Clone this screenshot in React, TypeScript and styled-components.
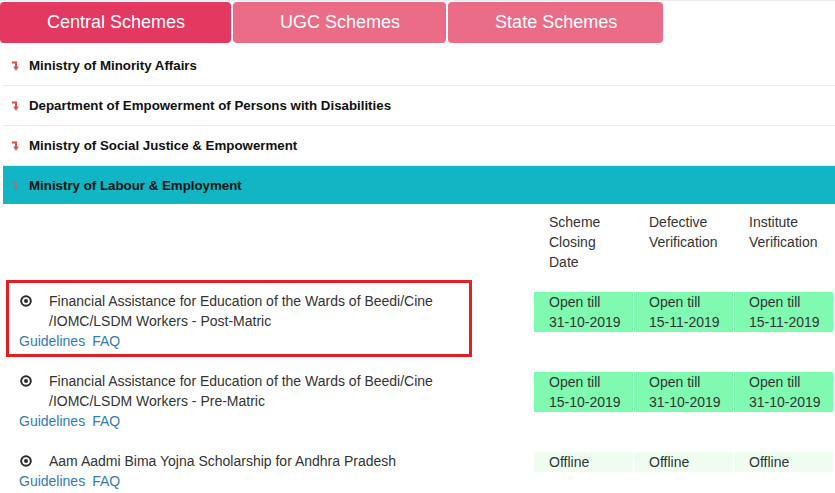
import React, { FC } from 'react';
import styled, { createGlobalStyle } from 'styled-components';

const GlobalStyle = createGlobalStyle`
  body {
    margin: 0;
    background: #fff;
    font-family: 'Liberation Sans', Arial, sans-serif;
    color: #333;
  }
`;

type Scheme = {
  title: string[];
  dates: string[][];
  offline?: boolean;
  highlighted?: boolean;
};

const tabs = ['Central Schemes', 'UGC Schemes', 'State Schemes'];

const ministries = [
  'Ministry of Minority Affairs',
  'Department of Empowerment of Persons with Disabilities',
  'Ministry of Social Justice & Empowerment',
  'Ministry of Labour & Employment',
];

const schemes: Scheme[] = [
  {
    title: ['Financial Assistance for Education of the Wards of Beedi/Cine', '/IOMC/LSDM Workers - Post-Matric'],
    dates: [
      ['Open till', '31-10-2019'],
      ['Open till', '15-11-2019'],
      ['Open till', '15-11-2019'],
    ],
    highlighted: true,
  },
  {
    title: ['Financial Assistance for Education of the Wards of Beedi/Cine', '/IOMC/LSDM Workers - Pre-Matric'],
    dates: [
      ['Open till', '15-10-2019'],
      ['Open till', '31-10-2019'],
      ['Open till', '31-10-2019'],
    ],
  },
  {
    title: ['Aam Aadmi Bima Yojna Scholarship for Andhra Pradesh'],
    dates: [['Offline'], ['Offline'], ['Offline']],
    offline: true,
  },
];

const ArrowIcon: FC = () => (
  <svg width="8" height="10" viewBox="0 0 8 10">
    <path d="M0 1.5 H4 V6" fill="none" stroke="#d9534f" strokeWidth="2" />
    <path d="M1 5.5 H7 L4 9.8 Z" fill="#d9534f" />
  </svg>
);

const RecordIcon: FC = () => (
  <svg width="12" height="12" viewBox="0 0 12 12">
    <circle cx="6" cy="6" r="4.8" fill="none" stroke="#2b2b2b" strokeWidth="2" />
    <circle cx="6" cy="6" r="2" fill="#2b2b2b" />
  </svg>
);

const App: FC = () => {
  return (
    <>
      <GlobalStyle />
      <Page>
        <TabBar>
          {tabs.map((t, i) => (
            <Tab key={t} active={i === 0}>
              {t}
            </Tab>
          ))}
        </TabBar>
        <Accordion>
          {ministries.map((m, i) => (
            <Ministry key={m} open={i === ministries.length - 1}>
              <ArrowWrap open={i === ministries.length - 1}>
                <ArrowIcon />
              </ArrowWrap>
              {m}
            </Ministry>
          ))}
        </Accordion>
        <Table>
          <HeaderRow>
            <span />
            <HeaderCell>Scheme Closing Date</HeaderCell>
            <HeaderCell>Defective Verification</HeaderCell>
            <HeaderCell>Institute Verification</HeaderCell>
          </HeaderRow>
          {schemes.map((s, i) => (
            <SchemeRow key={i}>
              <SchemeInfo highlighted={s.highlighted}>
                <TitleLine>
                  <IconBox>
                    <RecordIcon />
                  </IconBox>
                  <div>
                    {s.title.map((l) => (
                      <div key={l}>{l}</div>
                    ))}
                  </div>
                </TitleLine>
                <Links>
                  <Link href="#">Guidelines</Link>
                  <Link href="#">FAQ</Link>
                </Links>
              </SchemeInfo>
              {s.dates.map((d, j) => (
                <DateCell key={j} offline={s.offline}>
                  {d.map((l) => (
                    <div key={l}>{l}</div>
                  ))}
                </DateCell>
              ))}
            </SchemeRow>
          ))}
        </Table>
      </Page>
    </>
  );
};

export default App;

const Page = styled.div`
  width: 835px;
  border-top: 1px solid #eee;
  padding-top: 1px;
`;
const TabBar = styled.div`
  display: flex;
  gap: 2px;
`;
const Tab = styled.div<{ active?: boolean }>`
  height: 41px;
  line-height: 41px;
  padding: 0 46px 0 47px;
  border-radius: 4px;
  font-size: 18px;
  color: #fff;
  background-color: ${(p) => (p.active ? '#e3385f' : '#eb6c87')};
  cursor: pointer;
`;
const Accordion = styled.div`
  margin: 3px 0 0 3px;
`;
const Ministry = styled.div<{ open?: boolean }>`
  display: flex;
  align-items: center;
  height: ${(p) => (p.open ? '38px' : '39px')};
  padding-left: 9px;
  font-size: 13.3px;
  font-weight: 700;
  color: #111;
  background-color: ${(p) => (p.open ? '#12b5c3' : '#fff')};
  border-bottom: ${(p) => (p.open ? 'none' : '1px solid #e9e9e9')};
`;
const ArrowWrap = styled.span<{ open?: boolean }>`
  display: flex;
  width: 17px;
  margin-top: 1px;
  opacity: ${(p) => (p.open ? 0.45 : 1)};
`;
const Table = styled.div`
  margin-left: 3px;
  font-size: 14px;
  line-height: 20px;
`;
const HeaderRow = styled.div`
  display: grid;
  grid-template-columns: 531px repeat(3, 100px);
  padding: 8px 0;
`;
const HeaderCell = styled.div`
  padding: 0 15px;
`;
const SchemeRow = styled.div`
  display: grid;
  grid-template-columns: 531px repeat(3, 100px);
  align-items: start;
  margin-bottom: 3px;
`;
const SchemeInfo = styled.div<{ highlighted?: boolean }>`
  width: 466px;
  box-sizing: border-box;
  margin-left: 3px;
  padding: 8px 10px 3px;
  border: 3px solid ${(p) => (p.highlighted ? '#e31e25' : 'transparent')};
`;
const TitleLine = styled.div`
  display: flex;
`;
const IconBox = styled.span`
  display: flex;
  align-items: center;
  height: 20px;
  width: 29px;
  padding-left: 1px;
  flex-shrink: 0;
`;
const Links = styled.div`
  display: flex;
  gap: 7px;
`;
const Link = styled.a`
  color: #337ab7;
  text-decoration: none;
`;
const DateCell = styled.div<{ offline?: boolean }>`
  margin: 12px 1px 0 0;
  padding: 0 0 0 15px;
  white-space: nowrap;
  background-color: ${(p) => (p.offline ? '#effdf1' : '#80fab1')};
  color: #333;
`;
